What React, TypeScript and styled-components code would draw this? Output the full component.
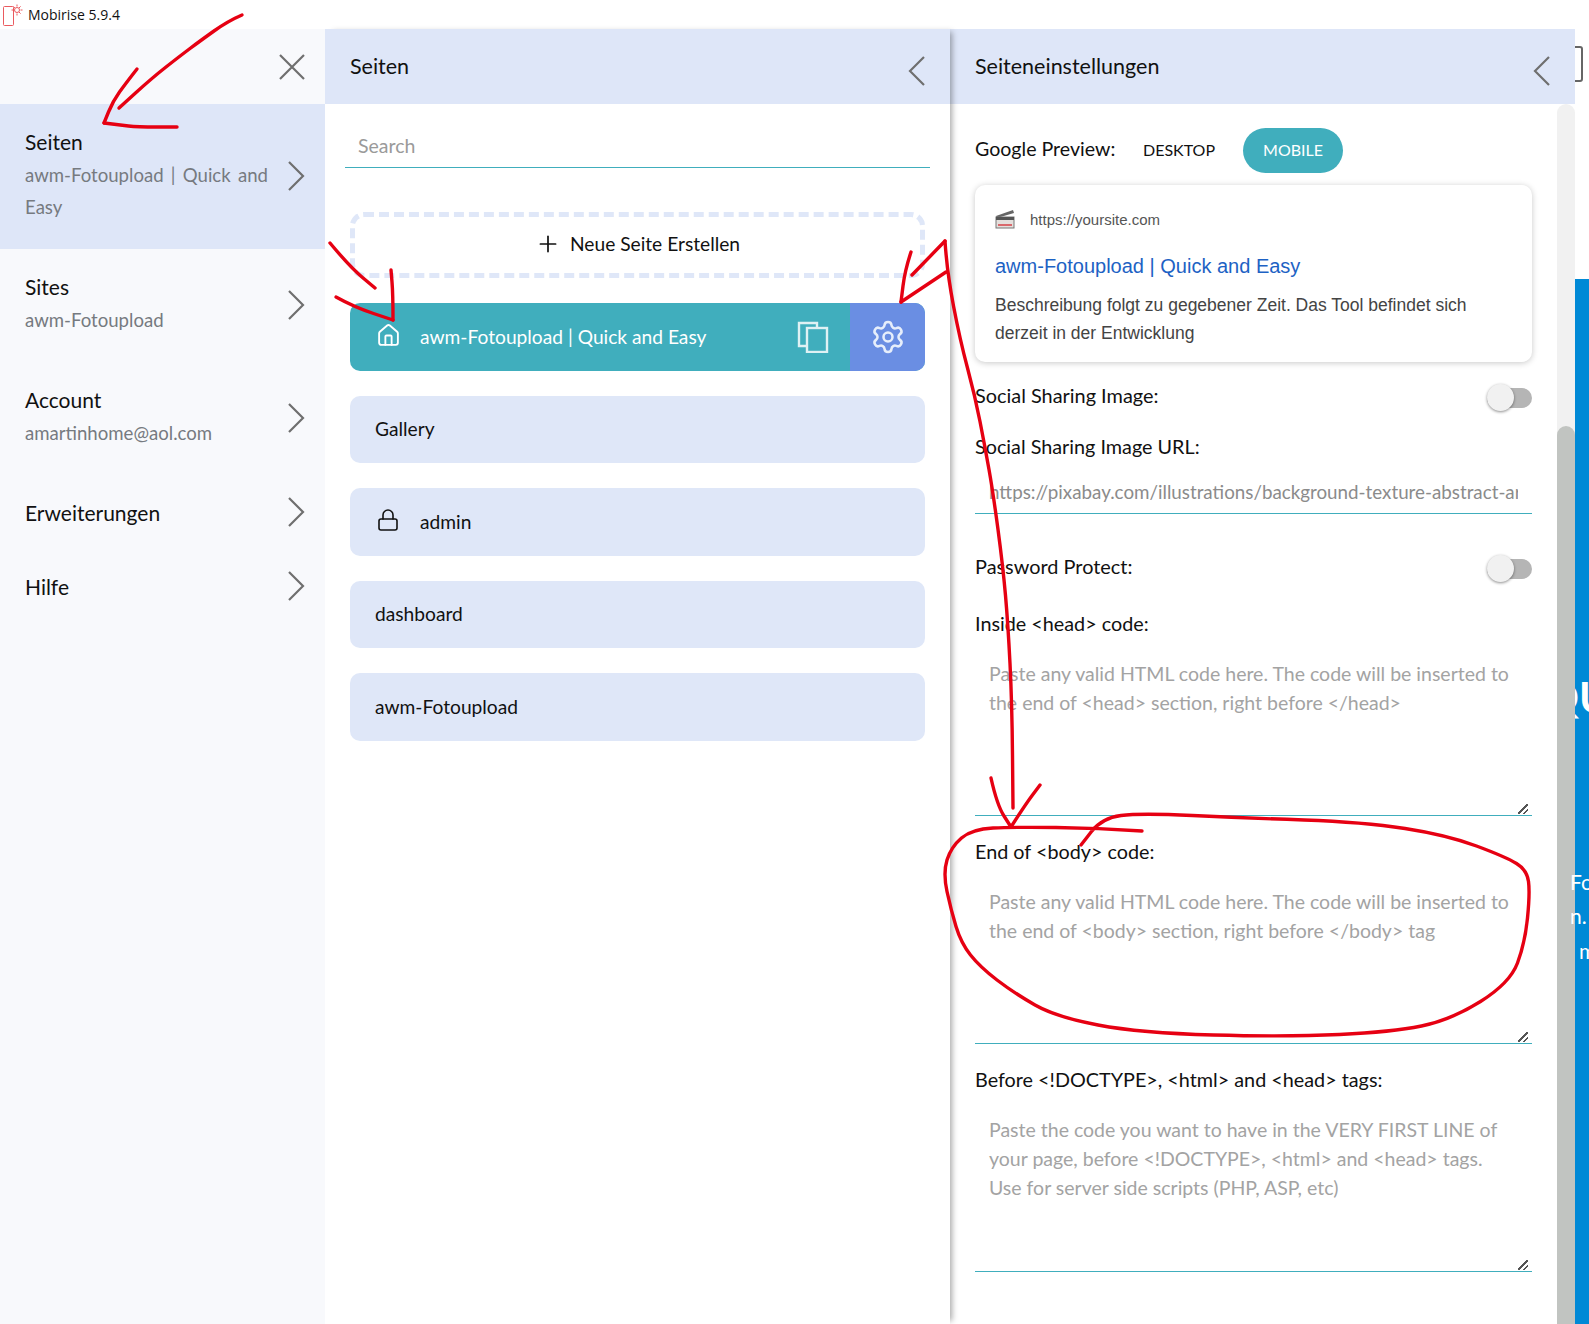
import { createGlobalStyle } from "styled-components";
import styled from "styled-components";
import { Home, Lock, Plus, Settings } from "lucide-react";

const GlobalStyle = createGlobalStyle`
  html, body {
    margin: 0;
    padding: 0;
    background: #fff;
    overflow: hidden;
  }
  * {
    box-sizing: border-box;
  }
`;

const FONT = `Lato, "Open Sans", sans-serif`;

const Page = styled.div`
  position: relative;
  width: 1589px;
  height: 1324px;
  overflow: hidden;
  font-family: ${FONT};
  color: #111;
`;

const TitleBar = styled.div`
  height: 29px;
  display: flex;
  align-items: center;
  padding-left: 2px;
  gap: 4px;
  font-family: "Open Sans", sans-serif;
  font-size: 14px;
  color: #111;
`;

const Main = styled.div`
  display: flex;
  height: 1295px;
`;

const Sidebar = styled.aside`
  width: 325px;
  background: #f8f9fc;
  flex-shrink: 0;
`;

const SidebarTop = styled.div`
  height: 75px;
  display: flex;
  align-items: center;
  justify-content: flex-end;
  padding-right: 19px;
  color: #6f6f6f;
`;

const NavItem = styled.div<{ $active?: boolean; $single?: boolean }>`
  display: flex;
  align-items: center;
  justify-content: space-between;
  padding: 20px 20px ${(p) => (p.$single ? "19px" : "26px")} 25px;
  background: ${(p) => (p.$active ? "#dee6f8" : "transparent")};
  color: #6f6f6f;
  svg {
    margin-top: ${(p) => (p.$single ? "-1px" : "4px")};
  }
`;

const NavText = styled.div`
  width: 262px;
  color: #111;
`;

const NavTitle = styled.div`
  font-size: 21px;
  line-height: 35px;
`;

const NavSub = styled.div`
  font-size: 18.6px;
  word-spacing: 2.5px;
  line-height: 32px;
  color: #767a80;
`;

const Panel = styled.section<{ $raised?: boolean }>`
  position: relative;
  width: 625px;
  flex-shrink: 0;
  background: #fff;
  z-index: ${(p) => (p.$raised ? 2 : 1)};
  box-shadow: ${(p) => (p.$raised ? "5px 0 6px -3px rgba(0, 0, 0, 0.35)" : "none")};
`;

const PanelHeader = styled.header`
  height: 75px;
  background: #dee6f8;
  display: flex;
  align-items: center;
  justify-content: space-between;
  padding: 0 24px 2px 25px;
  font-size: 21.5px;
  color: #111;
  svg {
    color: #6f6f6f;
    margin-top: 10px;
  }
`;

const PagesBody = styled.div`
  padding: 23px 20px 0;
`;

const SearchInput = styled.input`
  display: block;
  width: 100%;
  height: 41px;
  border: 0;
  border-bottom: 1px solid #40aebd;
  outline: 0;
  padding: 0 13px 4px;
  font: 19.5px ${FONT};
  background: transparent;
  &::placeholder {
    color: #9a9a9a;
  }
`;

const PageList = styled.div`
  display: flex;
  flex-direction: column;
  gap: 25px;
  padding: 0 5px;
  margin-top: 44px;
`;

const NewPage = styled.div`
  height: 66px;
  padding-bottom: 3px;
  border: 5px dashed #dfe7f8;
  border-radius: 14px;
  display: flex;
  align-items: center;
  justify-content: center;
  gap: 9px;
  font-size: 19.2px;
`;

const PageRow = styled.div<{ $current?: boolean }>`
  height: 67.5px;
  display: flex;
  align-items: center;
  border-radius: 10px;
  overflow: hidden;
  padding-left: ${(p) => (p.$current ? "0" : "25px")};
  background: ${(p) => (p.$current ? "#40aebd" : "#dfe7f8")};
  color: ${(p) => (p.$current ? "#fff" : "#111")};
  font-size: 19.2px;
`;

const RowCaption = styled.span`
  margin-top: -1px;
`;

const RowIcon = styled.span<{ $inset?: boolean }>`
  width: 70px;
  display: flex;
  justify-content: center;
  padding-left: 6px;
  margin-left: ${(p) => (p.$inset ? "-25px" : "0")};
  margin-top: -3px;
`;

const RowLabel = styled(RowCaption)`
  flex: 1;
`;

const CopyButton = styled.span`
  width: 75px;
  display: flex;
  justify-content: center;
  color: #dff1f4;
`;

const GearTab = styled.span`
  width: 75px;
  height: 100%;
  background: #6a8ee3;
  display: flex;
  align-items: center;
  justify-content: center;
  color: #e6eefb;
`;

const SettingsBody = styled.div`
  display: flex;
  height: 1220px;
`;

const SettingsForm = styled.div`
  flex: 1;
  padding: 24px 25px 0;
  overflow: hidden;
`;

const PreviewRow = styled.div`
  display: flex;
  align-items: center;
  height: 45px;
  font-size: 19.6px;
`;

const PreviewLabel = styled.span`
  width: 168px;
  margin-top: -5px;
`;

const PreviewTab = styled.span<{ $active?: boolean }>`
  height: 45px;
  padding-bottom: 2px;
  display: flex;
  align-items: center;
  justify-content: center;
  border-radius: 23px;
  font-size: 16px;
  width: ${(p) => (p.$active ? "100px" : "auto")};
  margin-left: ${(p) => (p.$active ? "28px" : "0")};
  background: ${(p) => (p.$active ? "#40aebd" : "transparent")};
  color: ${(p) => (p.$active ? "#fff" : "#111")};
`;

const GoogleCard = styled.div`
  height: 177px;
  margin-top: 12px;
  padding: 23px 20px 0;
  border-radius: 10px;
  background: #fff;
  box-shadow: 0 1px 6px rgba(0, 0, 0, 0.22);
  font-family: "Liberation Sans", Arial, sans-serif;
`;

const CardUrl = styled.div`
  display: flex;
  align-items: center;
  gap: 15px;
  height: 22px;
  font-size: 15px;
  color: #555;
`;

const CardLink = styled.div`
  margin-top: 23px;
  font-size: 20px;
  line-height: 26px;
  color: #1d62c4;
`;

const CardText = styled.div`
  margin-top: 12px;
  font-size: 17.5px;
  line-height: 28px;
  color: #444;
`;

const ToggleRow = styled.div<{ $gap: number }>`
  display: flex;
  align-items: center;
  justify-content: space-between;
  height: 30px;
  margin-top: ${(p) => p.$gap}px;
  font-size: 19.9px;
`;

const RowText = styled.span`
  margin-top: -2px;
`;

const Toggle = styled.span`
  position: relative;
  display: block;
  width: 45px;
  height: 20px;
  margin-top: 4px;
  border-radius: 10px;
  background: #b5b5b5;
  &::before {
    content: "";
    position: absolute;
    left: 0;
    top: -4px;
    width: 27px;
    height: 27px;
    border-radius: 50%;
    background: #f1f1f1;
    box-shadow: 0 1px 3px rgba(0, 0, 0, 0.45);
  }
`;

const FieldLabel = styled.div<{ $gap: number }>`
  height: 30px;
  line-height: 28px;
  margin-top: ${(p) => p.$gap}px;
  font-size: 19.8px;
`;

const UrlInput = styled.input`
  display: block;
  width: 100%;
  height: 45px;
  margin-top: 7px;
  padding: 0 14px;
  border: 0;
  border-bottom: 1px solid #40aebd;
  outline: 0;
  font: 18.8px ${FONT};
  color: #8b8b8b;
`;

const CodeArea = styled.textarea`
  display: block;
  width: 100%;
  height: 170px;
  margin-top: 7px;
  padding: 13px 14px 0;
  border: 0;
  border-bottom: 1px solid #40aebd;
  outline: 0;
  resize: vertical;
  font: 19.5px/29px ${FONT};
  &::placeholder {
    color: #a3a3a3;
  }
  &::-webkit-resizer {
    background: linear-gradient(
        135deg,
        transparent 44%,
        #555 44% 56%,
        transparent 56% 72%,
        #555 72% 84%,
        transparent 84%
      )
      no-repeat 1px 4px / 10px 10px;
  }
`;

const ScrollTrack = styled.div`
  width: 18px;
  padding-top: 322px;
  background: #f1f1f1;
  border-radius: 9px 9px 0 0;
`;

const ScrollThumb = styled.div`
  height: 100%;
  background: #c1c4c1;
  border-radius: 9px 9px 0 0;
`;

const Backdrop = styled.div`
  position: relative;
  flex: 1;
  background: #fff;
`;

const BackdropBlue = styled.div`
  position: absolute;
  inset: 250px 0 0 0;
  background: #0089d6;
`;

const WindowEdge = styled.div`
  position: absolute;
  left: -4px;
  top: 17px;
  width: 12px;
  height: 36px;
  border: 2px solid #666;
  border-radius: 3px;
`;

const BehindText = styled.span<{ $left: number; $top: number; $size: number; $bold?: boolean; $over?: boolean }>`
  position: absolute;
  z-index: ${(p) => (p.$over ? 3 : 0)};
  left: ${(p) => p.$left}px;
  top: ${(p) => p.$top}px;
  color: #fff;
  font-size: ${(p) => p.$size}px;
  font-weight: ${(p) => (p.$bold ? 700 : 400)};
  line-height: 1;
  white-space: nowrap;
`;

const Scribbles = styled.svg`
  position: absolute;
  left: 0;
  top: 0;
  z-index: 5;
  pointer-events: none;
`;

type Pt = [number, number];

// pen strokes drawn on top of the screenshot
const strokes: Pt[][] = [
  [[242, 15], [228, 21], [200, 41], [180, 56], [152, 78], [119, 108]],
  [[137, 69], [126, 83], [113, 101], [104, 123]],
  [[104, 123], [120, 125], [137, 127], [177, 127]],
  [[330, 243], [350, 267], [375, 288]],
  [[336, 297], [354, 307], [393, 320]],
  [[393, 320], [393, 294], [391, 270]],
  [[911, 252], [905, 270], [901, 302]],
  [[901, 302], [946, 272]],
  [[912, 275], [945, 241]],
  [[945, 241], [947, 272], [960, 340], [975, 396], [985, 447], [993, 492], [1003, 567], [1008, 624], [1012, 703], [1013, 808]],
  [[991, 778], [997, 805], [1011, 827]],
  [[1011, 827], [1025, 805], [1040, 785]],
  [
    [1142, 831], [1098, 828], [1014, 827], [972, 829], [951, 847], [943, 873], [951, 910], [961, 943], [980, 967],
    [1014, 993], [1056, 1017], [1140, 1033], [1287, 1037], [1392, 1032], [1451, 1020], [1510, 983], [1525, 943],
    [1530, 893], [1527, 870], [1506, 857], [1447, 835], [1363, 822], [1245, 818], [1140, 813], [1102, 818], [1081, 845],
  ],
];

function smooth(pts: Pt[]) {
  let d = `M${pts[0][0]} ${pts[0][1]}`;
  for (let i = 1; i < pts.length - 1; i++) {
    const mx = (pts[i][0] + pts[i + 1][0]) / 2;
    const my = (pts[i][1] + pts[i + 1][1]) / 2;
    d += ` Q${pts[i][0]} ${pts[i][1]} ${mx} ${my}`;
  }
  const last = pts[pts.length - 1];
  return d + ` L${last[0]} ${last[1]}`;
}

const Logo = () => (
  <svg width="22" height="24" viewBox="0 0 22 24" fill="none" stroke="#ea5a5f" strokeWidth="1">
    <rect x="1.5" y="3.5" width="10" height="19" rx="1" />
    <circle cx="15" cy="7" r="2.5" />
    <path d="M15 1.5v2M15 10.5v2M9.5 7h2M18.5 7h2M11.5 3.5l1.4 1.4M17 9l1.6 1.6M18.6 3.4L17 5" />
  </svg>
);

const CopyIcon = () => (
  <svg width="32" height="32" viewBox="0 0 32 32" fill="none" stroke="currentColor" strokeWidth="2.4">
    <path d="M9 25H2V2h18v5" />
    <rect x="10" y="7" width="20" height="24" />
  </svg>
);

const Clapper = () => (
  <svg width="20" height="20" viewBox="0 0 20 20">
    <path d="M1 7L18 1l1 3L2 9z" fill="#666" />
    <rect x="1" y="8" width="18" height="11" fill="#e4dfdc" stroke="#777" />
    <rect x="1" y="8" width="18" height="3" fill="#555" />
    <rect x="3" y="15" width="14" height="2" fill="#d9686c" />
  </svg>
);

const CloseIcon = () => (
  <svg width="28" height="28" viewBox="0 0 28 28" fill="none" stroke="currentColor" strokeWidth="2.2">
    <path d="M2 2l24 24M26 2L2 26" />
  </svg>
);

const ChevronRightIcon = () => (
  <svg width="18" height="32" viewBox="0 0 18 32" fill="none" stroke="currentColor" strokeWidth="2.2">
    <path d="M2 2l14 14L2 30" />
  </svg>
);

const ChevronLeftIcon = () => (
  <svg width="18" height="32" viewBox="0 0 18 32" fill="none" stroke="currentColor" strokeWidth="2.2">
    <path d="M16 2L2 16l14 14" />
  </svg>
);

const navItems = [
  { title: "Seiten", sub: "awm-Fotoupload | Quick and Easy", active: true },
  { title: "Sites", sub: "awm-Fotoupload" },
  { title: "Account", sub: "amartinhome@aol.com" },
  { title: "Erweiterungen" },
  { title: "Hilfe" },
];

const HEAD_HINT =
  "Paste any valid HTML code here. The code will be inserted to\nthe end of <head> section, right before </head>";
const BODY_HINT =
  "Paste any valid HTML code here. The code will be inserted to\nthe end of <body> section, right before </body> tag";
const DOCTYPE_HINT =
  "Paste the code you want to have in the VERY FIRST LINE of\nyour page, before <!DOCTYPE>, <html> and <head> tags.\nUse for server side scripts (PHP, ASP, etc)";

export default function App() {
  return (
    <Page>
      <GlobalStyle />
      <TitleBar>
        <Logo />
        Mobirise 5.9.4
      </TitleBar>
      <Main>
        <Sidebar>
          <SidebarTop>
            <CloseIcon />
          </SidebarTop>
          {navItems.map((item) => (
            <NavItem key={item.title} $active={item.active} $single={!item.sub}>
              <NavText>
                <NavTitle>{item.title}</NavTitle>
                {item.sub && <NavSub>{item.sub}</NavSub>}
              </NavText>
              <ChevronRightIcon />
            </NavItem>
          ))}
        </Sidebar>

        <Panel $raised>
          <PanelHeader>
            Seiten
            <ChevronLeftIcon />
          </PanelHeader>
          <PagesBody>
            <SearchInput placeholder="Search" />
            <PageList>
              <NewPage>
                <Plus size={26} strokeWidth={1.6} />
                Neue Seite Erstellen
              </NewPage>
              <PageRow $current>
                <RowIcon>
                  <Home size={25} strokeWidth={1.8} />
                </RowIcon>
                <RowLabel>awm-Fotoupload | Quick and Easy</RowLabel>
                <CopyButton>
                  <CopyIcon />
                </CopyButton>
                <GearTab>
                  <Settings size={36} strokeWidth={1.7} />
                </GearTab>
              </PageRow>
              <PageRow>
                <RowCaption>Gallery</RowCaption>
              </PageRow>
              <PageRow>
                <RowIcon $inset>
                  <Lock size={24} strokeWidth={1.6} />
                </RowIcon>
                <RowCaption>admin</RowCaption>
              </PageRow>
              <PageRow>
                <RowCaption>dashboard</RowCaption>
              </PageRow>
              <PageRow>
                <RowCaption>awm-Fotoupload</RowCaption>
              </PageRow>
            </PageList>
          </PagesBody>
        </Panel>

        <Panel>
          <PanelHeader>
            Seiteneinstellungen
            <ChevronLeftIcon />
          </PanelHeader>
          <SettingsBody>
            <SettingsForm>
              <PreviewRow>
                <PreviewLabel>Google Preview:</PreviewLabel>
                <PreviewTab>DESKTOP</PreviewTab>
                <PreviewTab $active>MOBILE</PreviewTab>
              </PreviewRow>
              <GoogleCard>
                <CardUrl>
                  <Clapper />
                  https://yoursite.com
                </CardUrl>
                <CardLink>awm-Fotoupload | Quick and Easy</CardLink>
                <CardText>
                  Beschreibung folgt zu gegebener Zeit. Das Tool befindet sich derzeit in der Entwicklung
                </CardText>
              </GoogleCard>
              <ToggleRow $gap={19}>
                <RowText>Social Sharing Image:</RowText>
                <Toggle />
              </ToggleRow>
              <FieldLabel $gap={21}>Social Sharing Image URL:</FieldLabel>
              <UrlInput
                readOnly
                value="https://pixabay.com/illustrations/background-texture-abstract-art-1234567/"
              />
              <ToggleRow $gap={38}>
                <RowText>Password Protect:</RowText>
                <Toggle />
              </ToggleRow>
              <FieldLabel $gap={27}>Inside &lt;head&gt; code:</FieldLabel>
              <CodeArea placeholder={HEAD_HINT} />
              <FieldLabel $gap={21}>End of &lt;body&gt; code:</FieldLabel>
              <CodeArea placeholder={BODY_HINT} />
              <FieldLabel $gap={21}>Before &lt;!DOCTYPE&gt;, &lt;html&gt; and &lt;head&gt; tags:</FieldLabel>
              <CodeArea placeholder={DOCTYPE_HINT} />
            </SettingsForm>
            <ScrollTrack>
              <ScrollThumb />
            </ScrollTrack>
          </SettingsBody>
        </Panel>

        <Backdrop>
          <WindowEdge />
          <BackdropBlue />
          <BehindText $left={-30} $top={647} $size={42} $bold>
            QU
          </BehindText>
          <BehindText $left={-5} $top={842} $size={21} $over>
            Fo
          </BehindText>
          <BehindText $left={-5} $top={876} $size={21} $over>
            n.
          </BehindText>
          <BehindText $left={4} $top={911} $size={21}>
            m
          </BehindText>
        </Backdrop>
      </Main>

      <Scribbles width="1589" height="1324" viewBox="0 0 1589 1324" fill="none">
        {strokes.map((pts, i) => (
          <path key={i} d={smooth(pts)} stroke="#e60012" strokeWidth="3.4" strokeLinecap="round" strokeLinejoin="round" />
        ))}
      </Scribbles>
    </Page>
  );
}
